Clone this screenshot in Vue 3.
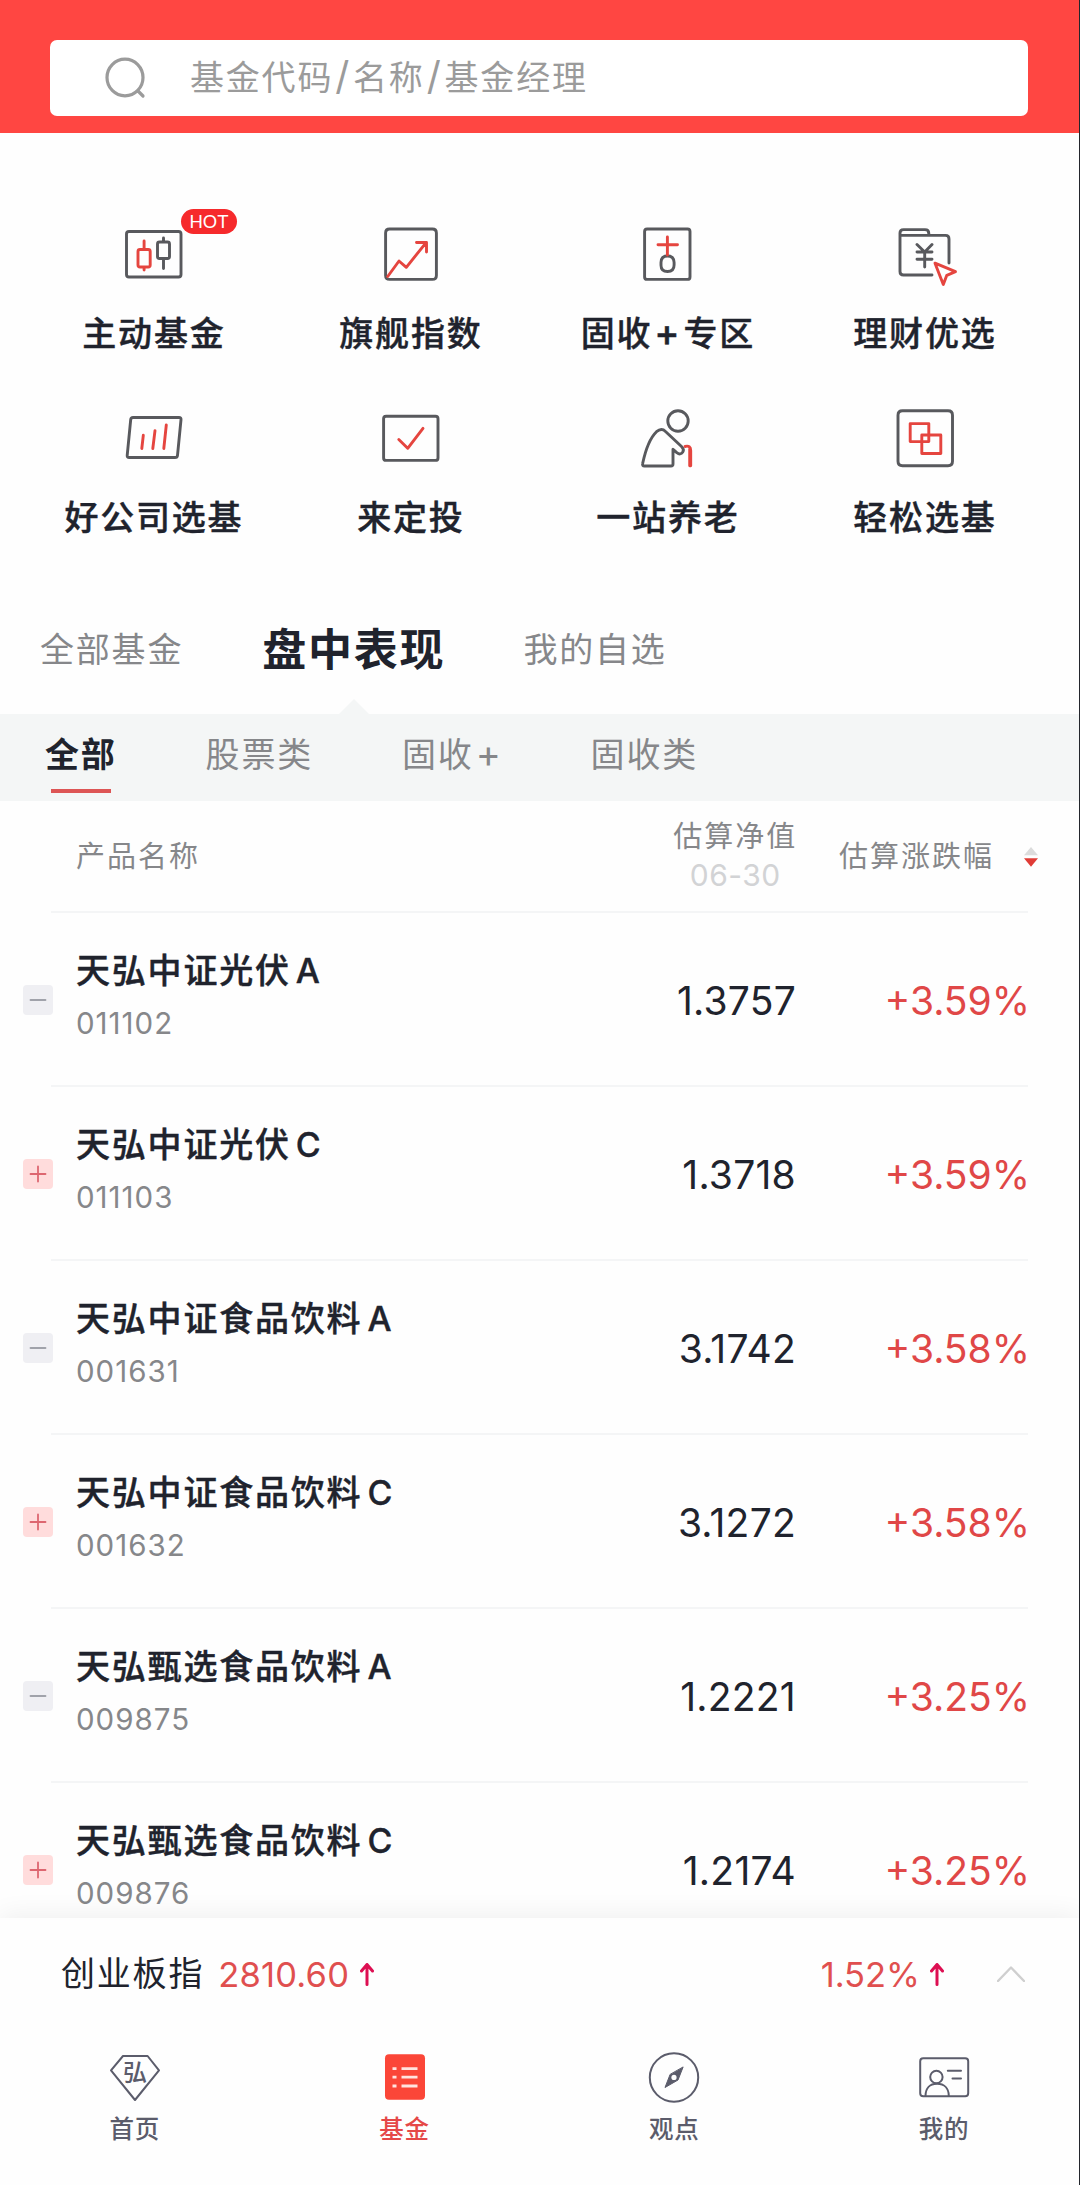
<style>
body {
  margin: 0;
  background: #fff;
}
</style>
<style scoped>
.page {
  box-sizing: border-box;
  width: 1080px;
  height: 2185px;
  display: flex;
  flex-direction: column;
  overflow: hidden;
  background: #fefefe;
  border-right: 1px solid #23262c;
  font-family: Inter, "Noto Sans CJK SC", sans-serif;
  color: #20232d;
  white-space: nowrap;
}
svg {
  display: block;
  fill: none;
  stroke-linecap: round;
  stroke-linejoin: round;
}

/* search */
.header {
  flex: none;
  box-sizing: border-box;
  height: 133px;
  padding: 40px 51px 17px 50px;
  background: #ff4642;
}
.search {
  height: 76px;
  display: flex;
  align-items: center;
  border-radius: 7px;
  background: #fff;
  color: #9b9b9b;
  font-size: 34px;
  letter-spacing: 1.8px;
}
.search svg {
  margin: 0 44px 0 54px;
}
.placeholder {
  line-height: 48px;
  padding-bottom: 1px;
}
.placeholder .latin {
  margin: 0 2px;
  font-size: 39px;
  line-height: 1;
}

/* entry grid */
.entries {
  flex: none;
  display: grid;
  grid-template-columns: repeat(4, 257px);
  grid-auto-rows: 184px;
  padding: 81px 0 0 25px;
  height: 391px;
}
.entry {
  display: flex;
  flex-direction: column;
  align-items: center;
}
.icon {
  position: relative;
}
.dark {
  stroke: #58595d;
  stroke-width: 2.9;
}
.red {
  stroke: #e5453f;
  stroke-width: 2.9;
}
.hot {
  position: absolute;
  left: 68px;
  top: -5px;
  width: 56px;
  height: 25px;
  line-height: 26px;
  border-radius: 13px;
  background: #f62a2c;
  color: #fff;
  font-family: "Liberation Sans", sans-serif;
  font-size: 18.5px;
  text-align: center;
}
.entry_name {
  margin-top: 16px;
  height: 48px;
  line-height: 48px;
  font-size: 34px;
  font-weight: 500;
  letter-spacing: 1.8px;
  margin-right: -0.8px;
  -webkit-text-stroke: 0.4px;
}
.entry_name .latin {
  margin: 0 2px;
  font-size: 38px;
  line-height: 1;
}

/* tabs */
.tabs {
  flex: none;
  display: flex;
  height: 109px;
  padding-left: 40px;
  font-size: 34px;
  letter-spacing: 1.8px;
  line-height: 90px;
  color: #86878a;
}
.tab {
  position: relative;
}
.tab.active {
  margin: 0 78px 0 79px;
  font-size: 44px;
  font-weight: 700;
  color: #20232d;
}
.tab.active::after {
  content: "";
  position: absolute;
  left: 50%;
  bottom: 0;
  margin-left: -15px;
  border: 15px solid transparent;
  border-top: 0;
  border-bottom-color: #f4f6f6;
}
.filters {
  flex: none;
  display: flex;
  height: 87px;
  padding-left: 45px;
  background: #f4f6f6;
  font-size: 34px;
  letter-spacing: 1.8px;
  line-height: 82px;
  color: #86878a;
}
.filter {
  position: relative;
  margin-right: 89px;
}
.filter .latin {
  margin: 0 -1px 0 2px;
  font-size: 38px;
  line-height: 1;
}
.filter.active {
  font-weight: 700;
  color: #20232d;
}
.filter.active::after {
  content: "";
  position: absolute;
  left: 6px;
  top: 75px;
  width: 60px;
  height: 4px;
  background: #dd5555;
}

/* list */
.table {
  flex: 1;
  min-height: 0;
  overflow: hidden;
}
.thead,
.row {
  display: grid;
  grid-template-columns: 76px 1fr 280px 232px;
  align-items: center;
  padding-right: 51px;
  background: linear-gradient(#f4f5f6, #f4f5f6) 51px 100% / 977px 2px no-repeat;
}
.thead {
  height: 112px;
  font-size: 29px;
  letter-spacing: 2px;
  line-height: 40px;
  color: #86878a;
}
.thead .name {
  grid-column: 2;
}
.thead .value {
  justify-self: end;
  text-align: center;
  margin-right: -1.2px;
}
.date {
  font-size: 30px;
  letter-spacing: 0.5px;
  line-height: 37px;
  padding-bottom: 3px;
  color: #d2d3d5;
}
.sort {
  display: flex;
  align-items: center;
  justify-content: flex-end;
  margin-right: -10px;
}
.sort svg {
  margin-left: 30px;
}
.row {
  height: 174px;
}
.badge {
  width: 30px;
  height: 30px;
  margin-left: 23px;
  border-radius: 4px;
  background: #efeff3;
  stroke: #a0a2aa;
}
.badge.plus {
  background: #ffdcdc;
  stroke: #dd6670;
}
.fund {
  padding-bottom: 5px;
}
.fund_name {
  font-size: 34px;
  font-weight: 500;
  letter-spacing: 1.8px;
  line-height: 50px;
  -webkit-text-stroke: 0.4px;
}
.fund_name .latin {
  margin-left: 5px;
}
.fund_code {
  font-size: 29.5px;
  letter-spacing: 1px;
  line-height: 54px;
  color: #86878a;
}
.row .value,
.row .rate {
  font-size: 39px;
  text-align: right;
}
.row .value {
  letter-spacing: 0.25px;
}
.row .rate {
  margin-right: -2px;
  color: #e04747;
}

/* bottom */
.footer {
  flex: none;
  position: relative;
  height: 267px;
  background: #fefefe;
  box-shadow: 0 -4px 24px rgba(0, 0, 0, 0.06);
}
.index {
  display: flex;
  align-items: center;
  height: 112px;
  padding: 0 54px 0 61px;
  font-size: 34px;
  letter-spacing: 1.8px;
}
.index_name {
  line-height: 48px;
  padding-bottom: 1px;
}
.index .num {
  margin-left: 14px;
  font-size: 34.5px;
  letter-spacing: 0.2px;
  color: #e04f4f;
}
.index .up {
  margin-left: 11px;
  stroke: #dd0f52;
  stroke-width: 3;
}
.index .percent {
  margin-left: auto;
  letter-spacing: 0;
}
.index .percent + .up {
  margin-left: 10px;
}
.index .fold {
  margin-left: 53px;
  stroke: #cfcfcf;
  stroke-width: 2.4;
}
.nav {
  display: grid;
  grid-template-columns: repeat(4, 1fr);
  padding-top: 18px;
}
.nav_item {
  display: flex;
  flex-direction: column;
  align-items: center;
  font-size: 24.5px;
  font-weight: 500;
  letter-spacing: 0.8px;
  line-height: 42px;
  color: #5b5c6b;
}
.nav_item svg {
  stroke: #5b5c6b;
  stroke-width: 2;
}
.nav_item.active {
  color: #e54848;
}
.logo {
  fill: #5b5c6b;
  stroke: none;
  font-size: 24px;
}
</style>
<template>
<div class="page">
  <div class="header">
    <div class="search">
      <svg width="42" height="42" viewBox="0 0 42 42" stroke="#9b9b9b" stroke-width="3.2">
        <ellipse cx="21" cy="20.5" rx="18" ry="18.3" />
        <path d="M34 34l5 5" />
      </svg>
      <div class="placeholder"><span v-for="(part, i) in split_text('基金代码/名称/基金经理')" :key="i" :class="{ latin: part.latin }">{{ part.text }}</span></div>
    </div>
  </div>

  <div class="entries">
    <div v-for="entry in entries" :key="entry.name" class="entry">
      <div class="icon">
        <svg width="81" height="80" viewBox="0 0 81 80">
          <path class="dark" :d="entry.dark" />
          <path class="red" :d="entry.red" />
        </svg>
        <span v-if="entry.hot" class="hot">HOT</span>
      </div>
      <div class="entry_name"><span v-for="(part, i) in split_text(entry.name)" :key="i" :class="{ latin: part.latin }">{{ part.text }}</span></div>
    </div>
  </div>

  <div class="tabs">
    <div v-for="tab in tabs" :key="tab" class="tab" :class="{ active: tab==current_tab }" @click="current_tab=tab">{{ tab }}</div>
  </div>
  <div class="filters">
    <div v-for="f in filters" :key="f" class="filter" :class="{ active: f==current_filter }" @click="current_filter=f">
      <span v-for="(part, i) in split_text(f)" :key="i" :class="{ latin: part.latin }">{{ part.text }}</span>
    </div>
  </div>

  <div class="table">
    <div class="thead">
      <div class="name">产品名称</div>
      <div class="value">估算净值<div class="date">06-30</div></div>
      <div class="sort">
        估算涨跌幅
        <svg width="14" height="20" viewBox="0 0 14 20">
          <path d="M7 0l7 8.300h-14z" fill="#dcdcdc" />
          <path d="M0 11.300h14l-7 8.500z" fill="#e03c36" />
        </svg>
      </div>
    </div>
    <div v-for="fund in funds" :key="fund.code" class="row">
      <svg class="badge" :class="{ plus: fund.open }" viewBox="0 0 30 30" stroke-width="1.8">
        <path :d="fund.open ? 'M7.5 15h15M15 7.500v15' : 'M7.500 15h15'" />
      </svg>
      <div class="fund">
        <div class="fund_name"><span v-for="(part, i) in split_text(fund.name)" :key="i" :class="{ latin: part.latin }">{{ part.text }}</span></div>
        <div class="fund_code">{{ fund.code }}</div>
      </div>
      <div class="value">{{ fund.value }}</div>
      <div class="rate">{{ fund.rate }}</div>
    </div>
  </div>

  <div class="footer">
    <div class="index">
      <span class="index_name">创业板指</span>
      <span class="num">2810.60</span>
      <svg class="up" width="14" height="24" viewBox="0 0 14 24"><path d="M7 22.500V2.500M1.500 9L7 2.500L12.500 9" /></svg>
      <span class="num percent">1.52%</span>
      <svg class="up" width="14" height="24" viewBox="0 0 14 24"><path d="M7 22.500V2.500M1.500 9L7 2.500L12.500 9" /></svg>
      <svg class="fold" width="28" height="16" viewBox="0 0 28 16"><path d="M1 15L14 1.500L27 15" /></svg>
    </div>
    <div class="nav">
      <div class="nav_item">
        <svg width="60" height="60" viewBox="0 0 60 60">
          <path d="M18 8H42.600L54 22.300L30 52L6 22.300Z" />
          <text class="logo" x="30.300" y="33" text-anchor="middle">弘</text>
        </svg>
        首页
      </div>
      <div class="nav_item active">
        <svg width="60" height="60" viewBox="0 0 60 60">
          <rect x="10" y="6.300" width="40" height="45.400" rx="4" fill="#fb4638" stroke="none" />
          <path d="M17.500 20.700h4M26.500 20.700h16M17.500 29.200h4M26.500 29.200h16M17.500 38h4M26.500 38h16" stroke="#ffe3df" stroke-width="2.800" stroke-linecap="butt" />
        </svg>
        基金
      </div>
      <div class="nav_item">
        <svg width="60" height="60" viewBox="0 0 60 60">
          <circle cx="30" cy="29.500" r="24.200" />
          <path d="M39 19.300L34 32L21 39.500L26 26.700Z" fill="#5b5c6b" stroke-width="1" />
          <circle cx="30" cy="29.400" r="2.600" fill="#fff" stroke="none" />
        </svg>
        观点
      </div>
      <div class="nav_item">
        <svg width="60" height="60" viewBox="0 0 60 60">
          <rect x="6.200" y="10.300" width="48" height="38" rx="3" />
          <circle cx="22.400" cy="29" r="6.200" />
          <path d="M11.500 48C11.500 40 16 35.800 23 35.800S34.800 40 34.800 48M33.800 22.700H47M38.500 30.500H47" />
        </svg>
        我的
      </div>
    </div>
  </div>
</div>
</template>
<script setup>
import { ref } from "vue";

const entries = [
  {
    name: "主动基金",
    hot: true,
    dark: "M16 17.500H65.500Q68 17.500 68 20V60.500Q68 63 65.500 63H16Q13.500 63 13.500 60.500V20Q13.500 17.500 16 17.500ZM46.500 28H54.500Q56.500 28 56.500 30V42.500Q56.500 44.500 54.500 44.500H46.500Q44.500 44.500 44.500 42.500V30Q44.500 28 46.500 28ZM50.500 24V28M50.500 44.500V54.500",
    red: "M27 35.500H35.200Q37.200 35.500 37.200 37.500V51Q37.200 53 35.200 53H27Q25 53 25 51V37.500Q25 35.500 27 35.500ZM31.100 27V35.500M31.100 53V56"
  },
  {
    name: "旗舰指数",
    dark: "M19.600 15H62.400Q66.400 15 66.400 19V61.400Q66.400 65.400 62.400 65.400H19.600Q15.600 65.400 15.600 61.400V19Q15.600 15 19.600 15Z",
    red: "M17.700 62.500L29 47L36.300 53.300L55.500 29.300M46.500 28.500H56.500V38"
  },
  {
    name: "固收+专区",
    dark: "M20.100 15H60.500Q63 15 63 17.500V62.900Q63 65.400 60.500 65.400H20.100Q17.600 65.400 17.600 62.900V17.500Q17.600 15 20.100 15ZM34 48.600Q34 42 40.500 42T47.100 48.600V51Q47.100 57.500 40.500 57.500T34 51Z",
    red: "M40.400 23V41M31 30.800H50.500"
  },
  {
    name: "理财优选",
    dark: "M48 61H19.500Q16 61 16 57.500V19.100Q16 15.600 19.500 15.600H41Q44.800 15.600 44.800 19.400V21.400M16 21.400H61.500Q65 21.400 65 25V49M33 30.500L40.700 38L48 30.500M33 38H48M33 45.300H48M40.700 38V53",
    red: "M51 49.200L71.500 57.700L62.800 61.300L59.300 70.500Z"
  },
  {
    name: "好公司选基",
    dark: "M20 19.500H66Q68.200 19.500 68 21.700L64.500 57.300Q64.300 59.500 62 59.500H16.200Q14 59.500 14.200 57.300L17.700 21.700Q17.900 19.500 20 19.500Z",
    red: "M30.300 37.300L28.800 50.500M42 32.600L39.800 50.500M53.300 27L50.800 50.500"
  },
  {
    name: "来定投",
    dark: "M16.100 18.200H65.500Q68 18.200 68 20.700V59.900Q68 62.400 65.500 62.400H16.100Q13.600 62.400 13.600 59.900V20.700Q13.600 18.200 16.100 18.200Z",
    red: "M28.800 41.500L37.700 50.300L53 30.300"
  },
  {
    name: "一站养老",
    dark: "M61.200 23A10.200 10.200 0 1 1 40.800 23A10.200 10.200 0 1 1 61.200 23ZM17.500 68Q15 68 15.700 65.300C18.500 52 23 40 29.500 33.700Q34.500 29.500 38.500 33.500L54.500 48.500Q57.500 51.500 55.800 54Q53.500 57.500 49.800 54.700L46 51.300V66Q46 68 44 68Z",
    red: "M58 48.500Q63.700 47 63.700 52.500V67.800M62.700 51V67.800"
  },
  {
    name: "轻松选基",
    dark: "M18.500 12.700H64Q68.500 12.700 68.500 17.200V63.200Q68.500 67.700 64 67.700H18.500Q14 67.700 14 63.200V17.200Q14 12.700 18.500 12.700Z",
    red: "M26.200 25.600H44.800V43.600H26.200ZM37.800 37H56.800V55.500H37.800Z"
  }
];

const tabs = ["全部基金", "盘中表现", "我的自选"];
const current_tab = ref("盘中表现");
const filters = ["全部", "股票类", "固收+", "固收类"];
const current_filter = ref("全部");

const funds = ref([
  { name: "天弘中证光伏A", code: "011102", value: "1.3757", rate: "+3.59%", open: false },
  { name: "天弘中证光伏C", code: "011103", value: "1.3718", rate: "+3.59%", open: true },
  { name: "天弘中证食品饮料A", code: "001631", value: "3.1742", rate: "+3.58%", open: false },
  { name: "天弘中证食品饮料C", code: "001632", value: "3.1272", rate: "+3.58%", open: true },
  { name: "天弘甄选食品饮料A", code: "009875", value: "1.2221", rate: "+3.25%", open: false },
  { name: "天弘甄选食品饮料C", code: "009876", value: "1.2174", rate: "+3.25%", open: true }
]);

// latin letters and signs get a little room next to the hanzi
function split_text(text){
  return text.split(/([A-Z+/])/).filter(s=>s).map(s=>({ text: s, latin: /^[A-Z+/]$/.test(s) }));
}
</script>
